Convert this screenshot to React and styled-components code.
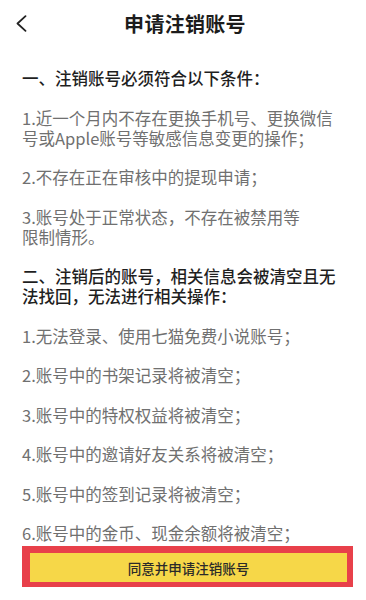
import React from 'react';
import styled, { createGlobalStyle } from 'styled-components';

const GlobalStyle = createGlobalStyle`
  html, body {
    margin: 0;
    padding: 0;
    background: #fff;
  }
  body {
    font-family: 'Noto Sans CJK SC', 'Noto Sans', sans-serif;
    -webkit-font-smoothing: antialiased;
  }
`;

const Page = styled.div`
  width: 366px;
  height: 600px;
  overflow: hidden;
  background: #fff;
`;

const Header = styled.header`
  display: grid;
  grid-template-columns: 44px 1fr 44px;
  align-items: center;
  height: 46px;
`;

const Back = styled.button`
  display: flex;
  align-items: center;
  justify-content: flex-start;
  padding: 0 0 0 15px;
  height: 46px;
  border: 0;
  background: none;
  color: #222;
`;

const Title = styled.h1`
  margin: 0;
  text-align: center;
  font-size: 20px;
  font-weight: 700;
  color: #1c1c1c;
  letter-spacing: 0.3px;
  padding-left: 4px;
`;

const Content = styled.main`
  display: flex;
  flex-direction: column;
  gap: 19.5px;
  padding: 22px 20px 0 22px;
`;

const Heading = styled.h2`
  margin: 0;
  font-size: 16.5px;
  line-height: 20px;
  font-weight: 500;
  color: #1f1f1f;
  white-space: nowrap;
`;

const Item = styled.p`
  margin: 0;
  font-size: 16.5px;
  line-height: 20px;
  font-weight: 400;
  color: #707070;
  white-space: nowrap;
`;

const Frame = styled.div`
  margin: 3px 13px 0 22px;
  border: 7px solid #e8404a;
  border-right-width: 6px;
  border-bottom-width: 5px;
  border-left-width: 8px;
`;

const Agree = styled.button`
  display: block;
  width: 100%;
  height: 29px;
  border: 0;
  background: #f6d748;
  color: #2a2a2a;
  font-family: 'Noto Sans CJK SC', sans-serif;
  font-size: 13.5px;
  font-weight: 500;
  padding: 0;
`;

const Chevron = () => (
  <svg width="12" height="17" viewBox="0 0 12 17" fill="none">
    <path d="M10.5 1.2L2.5 8.5l8 7.3" stroke="#222" strokeWidth="1.8" strokeLinecap="round" strokeLinejoin="round" />
  </svg>
);

const App = () => (
  <Page>
    <GlobalStyle />
    <Header>
      <Back aria-label="返回"><Chevron /></Back>
      <Title>申请注销账号</Title>
      <span />
    </Header>
    <Content>
      <Heading>一、注销账号必须符合以下条件：</Heading>
      <Item>1.近一个月内不存在更换手机号、更换微信<br />号或Apple账号等敏感信息变更的操作；</Item>
      <Item>2.不存在正在审核中的提现申请；</Item>
      <Item>3.账号处于正常状态，不存在被禁用等<br />限制情形。</Item>
      <Heading>二、注销后的账号，相关信息会被清空且无<br />法找回，无法进行相关操作：</Heading>
      <Item>1.无法登录、使用七猫免费小说账号；</Item>
      <Item>2.账号中的书架记录将被清空；</Item>
      <Item>3.账号中的特权权益将被清空；</Item>
      <Item>4.账号中的邀请好友关系将被清空；</Item>
      <Item>5.账号中的签到记录将被清空；</Item>
      <Item>6.账号中的金币、现金余额将被清空；</Item>
    </Content>
    <Frame>
      <Agree>同意并申请注销账号</Agree>
    </Frame>
  </Page>
);

export default App;
